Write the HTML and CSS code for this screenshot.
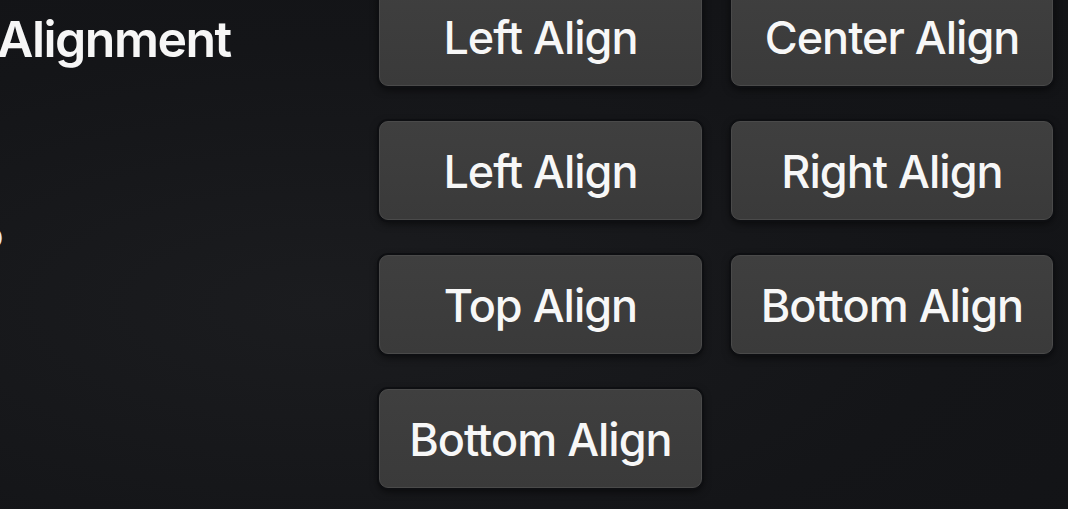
FILE: index.html
```html
<!DOCTYPE html>
<html lang="en">
<head>
<meta charset="utf-8">
<title>Alignment</title>
<link rel="stylesheet" href="styles.css">
</head>
<body>
<div class="page">
  <aside class="side">
    <h2 class="title">Alignment</h2>
    <span class="stub">o</span>
  </aside>
  <section class="grid">
    <button class="btn">Left Align</button>
    <button class="btn">Center Align</button>
    <button class="btn">Left Align</button>
    <button class="btn">Right Align</button>
    <button class="btn">Top Align</button>
    <button class="btn">Bottom Align</button>
    <button class="btn">Bottom Align</button>
  </section>
</div>
</body>
</html>
```
FILE: styles.css
```css
html, body {
  margin: 0;
  padding: 0;
  height: 100%;
  overflow: hidden;
}
body {
  background: radial-gradient(ellipse at 30% 60%, #1b1c1f 0%, #141518 60%, #121316 100%);
  font-family: Inter, "Noto Sans", sans-serif;
  color: #f4f4f4;
}
.page {
  display: flex;
  align-items: flex-start;
}
.side {
  width: 379px;
  display: flex;
  flex-direction: column;
  align-items: flex-start;
}
.title {
  margin: 9px 0 0 -3px;
  font-size: 50px;
  font-weight: 600;
  letter-spacing: -1.5px;
  line-height: 60px;
  color: #f6f6f6;
}
.stub {
  margin: 146px 0 0 -21px;
  font-size: 40px;
  font-weight: 600;
  line-height: 40px;
  color: #e8e8e8;
}
.grid {
  margin-top: -13px;
  display: grid;
  grid-template-columns: 323px 322px;
  grid-auto-rows: 99px;
  column-gap: 29px;
  row-gap: 35px;
}
.btn {
  margin: 0;
  padding: 2px 0 0;
  display: flex;
  align-items: center;
  justify-content: center;
  font-family: inherit;
  font-size: 45px;
  font-weight: 500;
  letter-spacing: -1px;
  color: #f7f7f7;
  background: linear-gradient(180deg, #3f3f3f 0%, #3a3a3a 100%);
  border: 1px solid #4a4a4a;
  border-radius: 9px;
  box-shadow: 0 0 0 2px #0e0f12, 0 3px 8px rgba(0, 0, 0, 0.65);
}
```
